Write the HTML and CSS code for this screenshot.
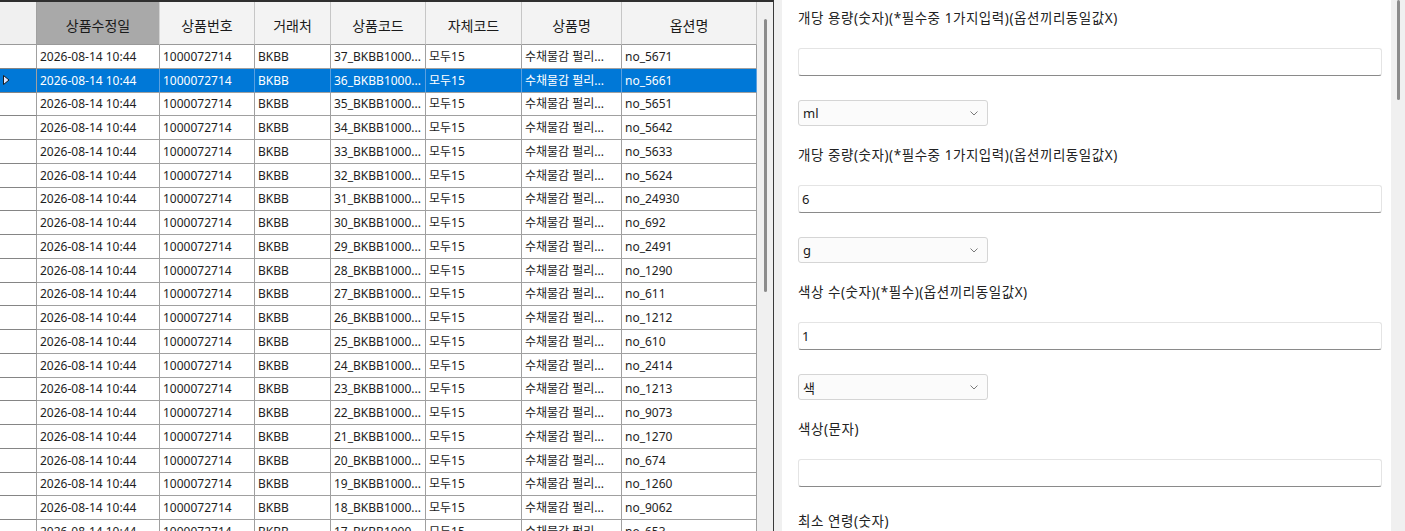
FILE: index.html
```html
<!DOCTYPE html>
<html lang="ko">
<head>
  <meta charset="UTF-8" />
  <meta name="viewport" content="width=device-width, initial-scale=1.0" />
  <title>상품 옵션 편집</title>
  <link rel="stylesheet" href="styles.css">
</head>
<body>
  <div class="grid-pane">
    <table class="grid">
      <colgroup>
        <col style="width: 37px">
        <col style="width: 123px">
        <col style="width: 95px">
        <col style="width: 76px">
        <col style="width: 95px">
        <col style="width: 96px">
        <col style="width: 100px">
        <col style="width: 135px">
      </colgroup>
      <thead>
        <tr>
          <th class="rowhead"></th>
          <th class="sorted">상품수정일</th>
          <th>상품번호</th>
          <th>거래처</th>
          <th>상품코드</th>
          <th>자체코드</th>
          <th>상품명</th>
          <th>옵션명</th>
        </tr>
      </thead>
      <tbody>
        <tr><td class="rowhead"></td><td>2026-08-14 10:44</td><td>1000072714</td><td>BKBB</td><td>37_BKBB1000...</td><td>모두15</td><td>수채물감 펄리...</td><td>no_5671</td></tr>
        <tr class="selected">
          <td class="rowhead"><svg class="cursor" width="7" height="10" viewBox="0 0 7 10"><polygon points="0.5,0.5 6,5 0.5,9.5" fill="#dfe6ff" stroke="#1b1b1b" stroke-width="1"/></svg></td>
          <td>2026-08-14 10:44</td><td>1000072714</td><td>BKBB</td><td>36_BKBB1000...</td><td>모두15</td><td>수채물감 펄리...</td><td>no_5661</td>
        </tr>
        <tr><td class="rowhead"></td><td>2026-08-14 10:44</td><td>1000072714</td><td>BKBB</td><td>35_BKBB1000...</td><td>모두15</td><td>수채물감 펄리...</td><td>no_5651</td></tr>
        <tr><td class="rowhead"></td><td>2026-08-14 10:44</td><td>1000072714</td><td>BKBB</td><td>34_BKBB1000...</td><td>모두15</td><td>수채물감 펄리...</td><td>no_5642</td></tr>
        <tr><td class="rowhead"></td><td>2026-08-14 10:44</td><td>1000072714</td><td>BKBB</td><td>33_BKBB1000...</td><td>모두15</td><td>수채물감 펄리...</td><td>no_5633</td></tr>
        <tr><td class="rowhead"></td><td>2026-08-14 10:44</td><td>1000072714</td><td>BKBB</td><td>32_BKBB1000...</td><td>모두15</td><td>수채물감 펄리...</td><td>no_5624</td></tr>
        <tr><td class="rowhead"></td><td>2026-08-14 10:44</td><td>1000072714</td><td>BKBB</td><td>31_BKBB1000...</td><td>모두15</td><td>수채물감 펄리...</td><td>no_24930</td></tr>
        <tr><td class="rowhead"></td><td>2026-08-14 10:44</td><td>1000072714</td><td>BKBB</td><td>30_BKBB1000...</td><td>모두15</td><td>수채물감 펄리...</td><td>no_692</td></tr>
        <tr><td class="rowhead"></td><td>2026-08-14 10:44</td><td>1000072714</td><td>BKBB</td><td>29_BKBB1000...</td><td>모두15</td><td>수채물감 펄리...</td><td>no_2491</td></tr>
        <tr><td class="rowhead"></td><td>2026-08-14 10:44</td><td>1000072714</td><td>BKBB</td><td>28_BKBB1000...</td><td>모두15</td><td>수채물감 펄리...</td><td>no_1290</td></tr>
        <tr><td class="rowhead"></td><td>2026-08-14 10:44</td><td>1000072714</td><td>BKBB</td><td>27_BKBB1000...</td><td>모두15</td><td>수채물감 펄리...</td><td>no_611</td></tr>
        <tr><td class="rowhead"></td><td>2026-08-14 10:44</td><td>1000072714</td><td>BKBB</td><td>26_BKBB1000...</td><td>모두15</td><td>수채물감 펄리...</td><td>no_1212</td></tr>
        <tr><td class="rowhead"></td><td>2026-08-14 10:44</td><td>1000072714</td><td>BKBB</td><td>25_BKBB1000...</td><td>모두15</td><td>수채물감 펄리...</td><td>no_610</td></tr>
        <tr><td class="rowhead"></td><td>2026-08-14 10:44</td><td>1000072714</td><td>BKBB</td><td>24_BKBB1000...</td><td>모두15</td><td>수채물감 펄리...</td><td>no_2414</td></tr>
        <tr><td class="rowhead"></td><td>2026-08-14 10:44</td><td>1000072714</td><td>BKBB</td><td>23_BKBB1000...</td><td>모두15</td><td>수채물감 펄리...</td><td>no_1213</td></tr>
        <tr><td class="rowhead"></td><td>2026-08-14 10:44</td><td>1000072714</td><td>BKBB</td><td>22_BKBB1000...</td><td>모두15</td><td>수채물감 펄리...</td><td>no_9073</td></tr>
        <tr><td class="rowhead"></td><td>2026-08-14 10:44</td><td>1000072714</td><td>BKBB</td><td>21_BKBB1000...</td><td>모두15</td><td>수채물감 펄리...</td><td>no_1270</td></tr>
        <tr><td class="rowhead"></td><td>2026-08-14 10:44</td><td>1000072714</td><td>BKBB</td><td>20_BKBB1000...</td><td>모두15</td><td>수채물감 펄리...</td><td>no_674</td></tr>
        <tr><td class="rowhead"></td><td>2026-08-14 10:44</td><td>1000072714</td><td>BKBB</td><td>19_BKBB1000...</td><td>모두15</td><td>수채물감 펄리...</td><td>no_1260</td></tr>
        <tr><td class="rowhead"></td><td>2026-08-14 10:44</td><td>1000072714</td><td>BKBB</td><td>18_BKBB1000...</td><td>모두15</td><td>수채물감 펄리...</td><td>no_9062</td></tr>
        <tr><td class="rowhead"></td><td>2026-08-14 10:44</td><td>1000072714</td><td>BKBB</td><td>17_BKBB1000...</td><td>모두15</td><td>수채물감 펄리...</td><td>no_653</td></tr>
      </tbody>
    </table>
    <div class="vscroll grid-scroll"><div class="thumb"></div></div>
  </div>

  <div class="panel">
    <div class="field">
      <label class="label">개당 용량(숫자)(*필수중 1가지입력)(옵션끼리동일값X)</label>
      <input class="textbox" type="text" value="">
      <div class="combo"><span>ml</span><svg width="8" height="5" viewBox="0 0 8 5"><polyline points="0.5,0.5 4,4 7.5,0.5" fill="none" stroke="#7a7a7a" stroke-width="1"/></svg></div>
    </div>
    <div class="field">
      <label class="label">개당 중량(숫자)(*필수중 1가지입력)(옵션끼리동일값X)</label>
      <input class="textbox" type="text" value="6">
      <div class="combo"><span>g</span><svg width="8" height="5" viewBox="0 0 8 5"><polyline points="0.5,0.5 4,4 7.5,0.5" fill="none" stroke="#7a7a7a" stroke-width="1"/></svg></div>
    </div>
    <div class="field">
      <label class="label">색상 수(숫자)(*필수)(옵션끼리동일값X)</label>
      <input class="textbox" type="text" value="1">
      <div class="combo"><span>색</span><svg width="8" height="5" viewBox="0 0 8 5"><polyline points="0.5,0.5 4,4 7.5,0.5" fill="none" stroke="#7a7a7a" stroke-width="1"/></svg></div>
    </div>
    <div class="field">
      <label class="label">색상(문자)</label>
      <input class="textbox" type="text" value="">
    </div>
    <div class="field">
      <label class="label">최소 연령(숫자)</label>
    </div>
  </div>

  <div class="vscroll page-scroll"><div class="thumb"></div></div>
</body>
</html>
```

FILE: styles.css
```css
html, body {
  margin: 0;
  height: 100%;
}
body {
  display: flex;
  height: 531px;
  overflow: hidden;
  background: #f0f0f0;
  font-family: "Noto Sans", "Noto Sans CJK KR", sans-serif;
  color: #1e1e1e;
}

/* data grid */
.grid-pane {
  display: flex;
  flex: none;
  width: 773px;
  border-top: 2px solid #2f2f2f;
  border-right: 1px solid #3a3a3a;
  background: #fff;
  overflow: hidden;
}
.grid {
  width: 757px;
  flex: none;
  table-layout: fixed;
  border-collapse: separate;
  border-spacing: 0;
  font-size: 12px;
  align-self: flex-start;
}
.grid th,
.grid td {
  box-sizing: border-box;
  padding: 1px 3px 0;
  white-space: nowrap;
  overflow: hidden;
  line-height: 1;
  border-right: 1px solid #a0a0a0;
  border-bottom: 1px solid #a0a0a0;
  text-align: left;
}
.grid thead tr { height: 43px; }
.grid th {
  padding-top: 5px;
  background: #f3f3f3;
  font-weight: 400;
  font-size: 14px;
  color: #1a1a1a;
  text-align: center;
  border-right-color: #c6c6c6;
  border-bottom-color: #9a9a9a;
}
.grid th.sorted {
  background: #a9a9a9;
  border-right-color: #d4d4d4;
}
.grid th.rowhead {
  background: #f0f0f0;
  border-right-color: #a0a0a0;
}
.grid tbody tr { height: 23.75px; }
.grid td.rowhead {
  background: #fff;
  border-bottom: 1px solid #858585;
  padding: 0 0 0 3px;
}
.grid tr.selected td {
  background: #0078d7;
  color: #fff;
  border-right-color: #5aa0e0;
}
.grid tr.selected td.rowhead {
  border-right-color: #a0a0a0;
}
.cursor {
  display: block;
}

/* scroll bars */
.vscroll {
  flex: none;
  background: #f0f0f0;
}
.vscroll .thumb {
  width: 3px;
  background: #8c8c8c;
  border-radius: 2px;
}
.grid-scroll {
  width: 16px;
  padding-top: 17px;
}
.grid-scroll .thumb {
  margin-left: 7px;
  height: 273px;
}
.page-scroll {
  width: 14px;
}
.page-scroll .thumb {
  margin-left: 6px;
  height: 100px;
}

/* option form */
.panel {
  flex: 1;
  margin-left: 8px;
  padding: 8px 9px 0 16px;
  background: #fff;
  overflow: hidden;
}
.field {
  display: flex;
  flex-direction: column;
  align-items: flex-start;
}
.label {
  display: block;
  height: 20px;
  line-height: 20px;
  margin-bottom: 20px;
  font-size: 13.5px;
  letter-spacing: 0.55px;
  color: #222;
  white-space: nowrap;
}
.textbox {
  box-sizing: border-box;
  width: 584px;
  height: 28px;
  margin: 0 0 24px;
  padding: 0 3px;
  border: 1px solid #e4e4e4;
  border-bottom-color: #8a8a8a;
  border-radius: 3px;
  background: #fff;
  font: 13px "Noto Sans", "Noto Sans CJK KR", sans-serif;
  color: #1a1a1a;
  outline: none;
}
.combo {
  box-sizing: border-box;
  display: flex;
  align-items: center;
  justify-content: space-between;
  width: 190px;
  height: 26px;
  margin-bottom: 19px;
  padding: 0 9px 0 4px;
  border: 1px solid #d5d5d5;
  border-radius: 3px;
  background: #fbfbfb;
  font-size: 13px;
  color: #1a1a1a;
}
```
